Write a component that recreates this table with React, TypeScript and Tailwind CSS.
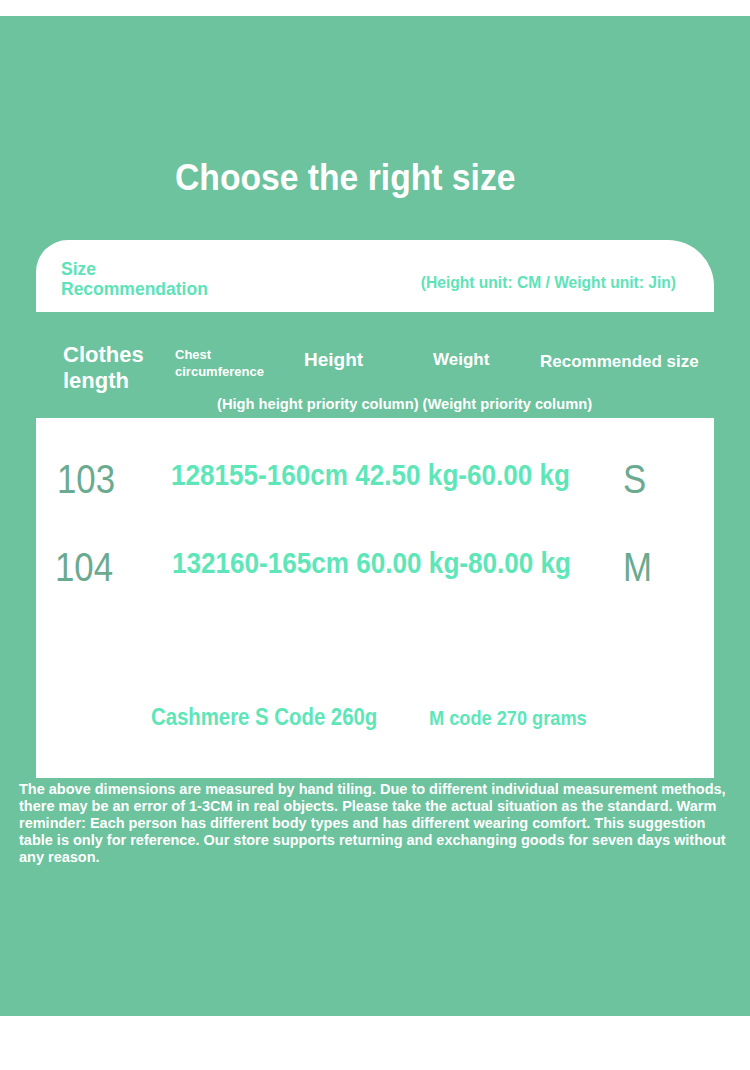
import React from "react";

const narrow = { fontFamily: '"Liberation Sans", Arial, sans-serif' };

export default function App() {
  return (
    <div className="w-[750px] h-[1070px] bg-white" style={narrow}>
      <div className="h-[16px] bg-white" />
      <div className="h-[1000px] bg-[#6cc39d] flex flex-col">
        <div className="pt-[140px] pl-[175px] h-[224px]">
          <h1 className="inline-block origin-left scale-x-[0.91] text-[37px] leading-[44px] font-bold text-white whitespace-nowrap">Choose the right size</h1>
        </div>
        <div className="mx-[36px] h-[72px] bg-white rounded-tl-[32px] rounded-tr-[46px] flex items-start justify-between pl-[25px] pr-[38px]">
          <div className="pt-[19px] text-[17.5px] leading-[20px] font-bold text-[#5ee3b8]">
            <div>Size</div>
            <div>Recommendation</div>
          </div>
          <div className="pt-[34px] text-[15.6px] leading-[18px] font-bold text-[#5ee3b8] whitespace-nowrap">
            (Height unit: CM / Weight unit: Jin)
          </div>
        </div>
        <div className="h-[106px] mx-[36px] flex flex-col text-white font-bold">
          <div className="flex items-start pt-[30px]">
            <div className="w-[139px] pl-[27px] text-[22px] leading-[26px]">
              <div>Clothes</div>
              <div>length</div>
            </div>
            <div className="w-[129px] pt-[4px] text-[13px] leading-[17px]">
              <div>Chest</div>
              <div>circumference</div>
            </div>
            <div className="w-[129px] pt-[7px] text-[19px] leading-[22px]">Height</div>
            <div className="w-[107px] pt-[7px] text-[17px] leading-[22px]">Weight</div>
            <div className="pt-[9px] text-[17px] leading-[22px] whitespace-nowrap">Recommended size</div>
          </div>
          <div className="pl-[181px] pt-[1px] text-[14.7px] leading-[18px] whitespace-nowrap">
            (High height priority column) (Weight priority column)
          </div>
        </div>
        <div className="mx-[36px] h-[360px] bg-white flex flex-col">
          <div className="flex items-center h-[44px] mt-[43px]">
            <div className="w-[135px] pl-[21px] leading-[44px]">
              <span className="inline-block origin-left scale-x-[0.87] text-[40px] text-[#6aaa90]">103</span>
            </div>
            <div className="w-[452px] -mt-[11px] leading-[34px] whitespace-nowrap">
              <span className="inline-block origin-left scale-x-[0.87] text-[30px] font-bold text-[#5ee6b8]">128155-160cm 42.50 kg-60.00 kg</span>
            </div>
            <div className="leading-[44px]">
              <span className="inline-block origin-left scale-x-[0.87] text-[40px] text-[#6aaa90]">S</span>
            </div>
          </div>
          <div className="flex items-center h-[44px] mt-[44px]">
            <div className="w-[135px] pl-[19px] leading-[44px]">
              <span className="inline-block origin-left scale-x-[0.87] text-[40px] text-[#6aaa90]">104</span>
            </div>
            <div className="w-[452px] pl-[1px] -mt-[11px] leading-[34px] whitespace-nowrap">
              <span className="inline-block origin-left scale-x-[0.87] text-[30px] font-bold text-[#5ee6b8]">132160-165cm 60.00 kg-80.00 kg</span>
            </div>
            <div className="leading-[44px]">
              <span className="inline-block origin-left scale-x-[0.87] text-[40px] text-[#6aaa90]">M</span>
            </div>
          </div>
          <div className="flex items-center mt-[110px] font-bold text-[#5ee6b8] whitespace-nowrap">
            <div className="w-[393px] pl-[115px] leading-[28px]">
              <span className="inline-block origin-left scale-x-[0.885] text-[23px]">Cashmere S Code 260g</span>
            </div>
            <div className="leading-[26px]">
              <span className="inline-block origin-left scale-x-[0.866] text-[21px]">M code 270 grams</span>
            </div>
          </div>
        </div>
        <p className="px-[19px] pt-[3px] pr-[16px] text-[14.5px] leading-[17px] font-bold text-white">
          The above dimensions are measured by hand tiling. Due to different individual measurement methods, there may be an error of 1-3CM in real objects. Please take the actual situation as the standard. Warm reminder: Each person has different body types and has different wearing comfort. This suggestion table is only for reference. Our store supports returning and exchanging goods for seven days without any reason.
        </p>
      </div>
    </div>
  );
}
